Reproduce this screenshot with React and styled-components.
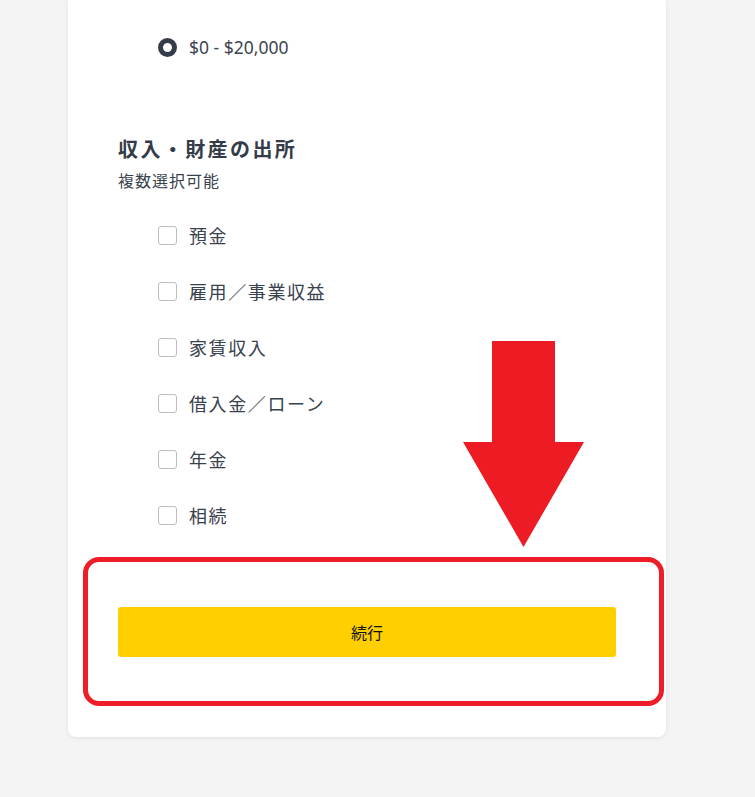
import React from "react";
import styled, { createGlobalStyle } from "styled-components";

const GlobalStyle = createGlobalStyle`
  body {
    margin: 0;
    background: #f4f4f4;
    font-family: "Noto Sans", "Noto Sans CJK JP", sans-serif;
    color: #39414d;
  }
`;

const Page = styled.div`
  min-height: 797px;
  overflow: hidden;
`;

const Card = styled.div`
  position: relative;
  margin-left: 68px;
  width: 598px;
  box-sizing: border-box;
  padding: 38px 50px 80px;
  background: #ffffff;
  border-radius: 0 0 8px 8px;
  box-shadow: 0 1px 4px rgba(0, 0, 0, 0.08);
`;

const RadioRow = styled.label`
  display: flex;
  align-items: center;
  gap: 12px;
  padding-left: 40px;
  height: 19px;
  font-size: 17.5px;
  line-height: 19px;
  color: #3d4450;
`;

const Radio = styled.span`
  width: 19px;
  height: 19px;
  box-sizing: border-box;
  border-radius: 50%;
  border: 5px solid #333c48;
  background: #ffffff;
  flex-shrink: 0;
`;

const Heading = styled.h2`
  margin: 79px 0 0;
  font-size: 20px;
  line-height: 28px;
  font-weight: 700;
  letter-spacing: 2.4px;
  color: #333c48;
`;

const Hint = styled.p`
  margin: 6px 0 0;
  font-size: 16px;
  line-height: 22px;
  letter-spacing: 1px;
`;

const CheckList = styled.div`
  margin-top: 15px;
  padding-left: 40px;
`;

const CheckRow = styled.label`
  display: flex;
  align-items: center;
  gap: 12px;
  height: 56px;
  font-size: 18px;
  letter-spacing: 1.6px;
`;

const Box = styled.span`
  width: 19px;
  height: 19px;
  box-sizing: border-box;
  border: 1px solid #bdbdbd;
  border-radius: 3px;
  background: #ffffff;
  flex-shrink: 0;
`;

const Button = styled.button`
  display: block;
  width: 100%;
  height: 50px;
  margin-top: 64px;
  border: none;
  border-radius: 3px;
  background: #ffcf00;
  color: #111111;
  font-family: inherit;
  font-size: 16px;
  cursor: pointer;
`;

const Highlight = styled.div`
  position: absolute;
  left: 15px;
  bottom: 31px;
  width: 581px;
  height: 149px;
  box-sizing: border-box;
  border: 5px solid #ee1d27;
  border-radius: 16px;
  pointer-events: none;
`;

const Arrow = styled.svg`
  position: absolute;
  left: 395px;
  bottom: 190px;
  width: 121px;
  height: 206px;
  pointer-events: none;
`;

const sources = ["預金", "雇用／事業収益", "家賃収入", "借入金／ローン", "年金", "相続"];

const App = () => {
  return (
    <Page>
      <GlobalStyle />
      <Card>
        <RadioRow>
          <Radio />
          $0 - $20,000
        </RadioRow>
        <Heading>収入・財産の出所</Heading>
        <Hint>複数選択可能</Hint>
        <CheckList>
          {sources.map(source => (
            <CheckRow key={source}>
              <Box />
              {source}
            </CheckRow>
          ))}
        </CheckList>
        <Button>続行</Button>
        <Highlight />
        <Arrow viewBox="0 0 121 206">
          <polygon points="29,0 92,0 92,101 121,101 60.5,206 0,101 29,101" fill="#ed1c24" />
        </Arrow>
      </Card>
    </Page>
  );
};

export default App;
